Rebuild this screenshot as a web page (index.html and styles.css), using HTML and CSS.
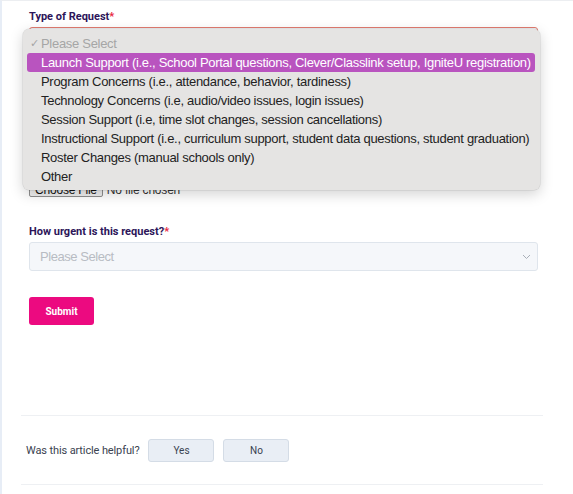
FILE: index.html
```html
<!DOCTYPE html>
<html>
<head>
<meta charset="utf-8">
<link rel="stylesheet" href="styles.css">
</head>
<body>
<div class="page">
  <div class="form">
    <div class="field">
      <label class="label">Type of Request<span class="req">*</span></label>
      <div class="select select-open"></div>
    </div>
    <div class="file-row">
      <span class="file-btn">Choose File</span>
      <span class="file-text">No file chosen</span>
    </div>
    <div class="field field-urgent">
      <label class="label">How urgent is this request?<span class="req">*</span></label>
      <div class="select">
        <span class="placeholder">Please Select</span>
        <svg class="chev" width="9" height="6" viewBox="0 0 9 6"><path d="M1 1l3.5 3.5L8 1" fill="none" stroke="#a9afb8" stroke-width="1"/></svg>
      </div>
    </div>
    <button class="submit">Submit</button>
    <ul class="menu">
      <li class="opt opt-ph"><span class="check">✓</span>Please Select</li>
      <li class="opt opt-active">Launch Support (i.e., School Portal questions, Clever/Classlink setup, IgniteU registration)</li>
      <li class="opt">Program Concerns (i.e., attendance, behavior, tardiness)</li>
      <li class="opt">Technology Concerns (i.e, audio/video issues, login issues)</li>
      <li class="opt">Session Support (i.e, time slot changes, session cancellations)</li>
      <li class="opt">Instructional Support (i.e., curriculum support, student data questions, student graduation)</li>
      <li class="opt">Roster Changes (manual schools only)</li>
      <li class="opt">Other</li>
    </ul>
  </div>
  <div class="feedback">
    <span class="fb-text">Was this article helpful?</span>
    <button class="fb-btn">Yes</button>
    <button class="fb-btn">No</button>
  </div>
</div>
</body>
</html>
```
FILE: styles.css
```css
html, body {
  margin: 0;
  padding: 0;
  background: #ffffff;
}
.page {
  height: 494px;
  box-sizing: border-box;
  border-left: 2px solid #e7edf6;
  border-top: 1px solid #eceef1;
  font-family: "Liberation Sans", Arial, sans-serif;
}
.form {
  position: relative;
  padding: 9px 0 0 27px;
  width: 509px;
}
.label {
  display: block;
  font-family: Roboto, "Liberation Sans", sans-serif;
  font-weight: 700;
  font-size: 11px;
  line-height: 13px;
  color: #2c1559;
}
.req {
  color: #e8263c;
}
.select {
  margin-top: 4px;
  height: 29px;
  box-sizing: border-box;
  border: 1px solid #dfe5ec;
  background: #f5f7fa;
  border-radius: 3px;
  display: flex;
  align-items: center;
  justify-content: space-between;
  padding: 0 6px 0 10px;
}
.select-open {
  border-color: #e07b6f;
}
.placeholder {
  font-size: 13px;
  letter-spacing: -0.45px;
  color: #b8bcc3;
}
.file-row {
  margin-top: 127px;
  display: flex;
  align-items: center;
  gap: 4px;
  height: 14px;
  font-size: 12px;
  letter-spacing: -0.2px;
}
.file-btn {
  border: 1px solid #8f8f8f;
  background: #efefef;
  border-radius: 2px;
  padding: 0 5px;
  line-height: 12px;
  color: #111;
}
.file-text {
  color: #333;
}
.field-urgent {
  margin-top: 28px;
}
.submit {
  display: block;
  margin-top: 26px;
  width: 65px;
  height: 28px;
  border: none;
  border-radius: 3px;
  background: #ec0a80;
  color: #fff;
  font-family: Roboto, "Liberation Sans", sans-serif;
  font-weight: 700;
  font-size: 10px;
  padding: 0;
}
.menu {
  position: absolute;
  top: 28px;
  left: 21px;
  width: 517px;
  box-sizing: border-box;
  margin: 0;
  padding: 5px 5px 4px 4px;
  list-style: none;
  background: #e5e4e3;
  border-radius: 6px;
  box-shadow: 0 4px 14px rgba(0,0,0,0.18), 0 0 0 0.5px rgba(0,0,0,0.12);
}
.opt {
  height: 19px;
  line-height: 19px;
  padding-left: 14px;
  font-size: 13px;
  letter-spacing: -0.3px;
  color: #222;
  white-space: nowrap;
  position: relative;
  border-radius: 3px;
}
.opt-ph {
  color: #a6a6a6;
}
.check {
  position: absolute;
  left: 3px;
  font-size: 11px;
}
.opt-active {
  background: #b954bf;
  color: #fff;
}
.feedback {
  margin: 90px 0 0 19px;
  width: 522px;
  border-top: 1px solid #eef0f3;
  border-bottom: 1px solid #eef0f3;
  box-sizing: border-box;
  height: 70px;
  display: flex;
  align-items: center;
  padding: 0 0 0 5px;
  gap: 9px;
  font-family: Roboto, "Liberation Sans", sans-serif;
}
.fb-text {
  font-size: 11px;
  letter-spacing: -0.12px;
  color: #3a4250;
}
.fb-btn {
  width: 66px;
  height: 23px;
  border: 1px solid #d4dce6;
  background: #e9eef5;
  border-radius: 3px;
  font-family: Roboto, "Liberation Sans", sans-serif;
  font-size: 10px;
  color: #3a4250;
  padding: 0;
}
```
